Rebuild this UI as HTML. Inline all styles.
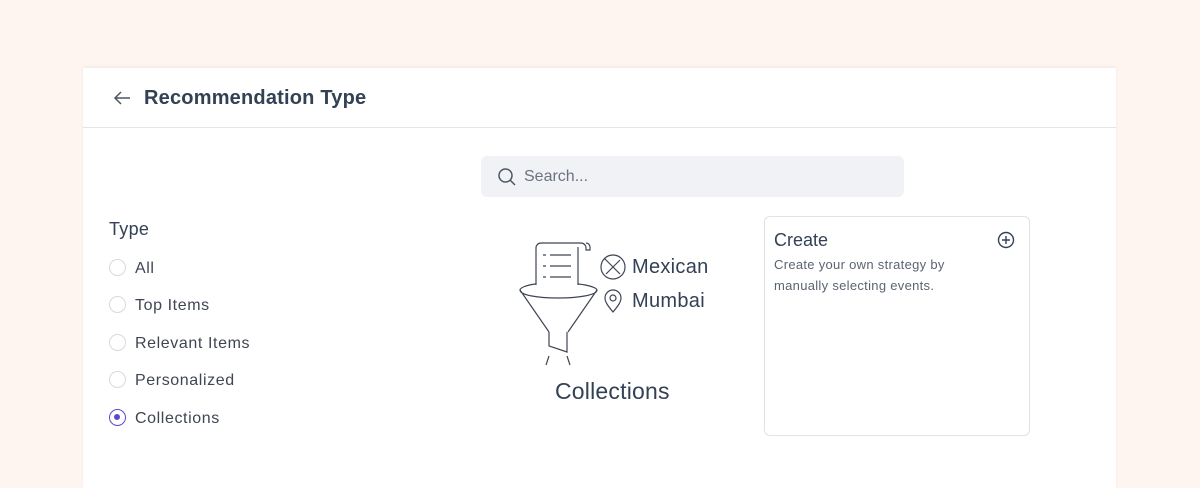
<!DOCTYPE html><html><head><style>
body{margin:0;width:1200px;height:474px;background:#fef5f0;font-family:"Liberation Sans",sans-serif;position:relative;overflow:hidden;color:#334155}
.card{position:absolute;left:83px;top:68px;width:1033px;height:420px;background:#fff;box-shadow:0 -1px 3px rgba(0,0,0,.06)}
.hdr{height:59px;border-bottom:1px solid #e2e5ea;position:relative}
.t{position:absolute;left:61px;top:19px;font-size:20px;font-weight:bold;color:#334155;letter-spacing:.2px}
.search{position:absolute;left:398px;top:88px;width:423px;height:41px;background:#f1f2f5;border-radius:6px}
.search span{position:absolute;left:43px;top:12px;font-size:16px;color:#6b7280}
.type{position:absolute;left:26px;top:151px;font-size:18px;color:#334155;letter-spacing:.3px}
.r{position:absolute;left:26px;font-size:16px;color:#3f4553;letter-spacing:.6px}
.r i{display:inline-block;width:17px;height:17px;border:1px solid #d6d9de;border-radius:50%;vertical-align:-3px;margin-right:9px;box-sizing:border-box;position:relative}
.r i.on{border:1.5px solid #5b4ad1}
.r i.on:after{content:"";position:absolute;left:4px;top:4px;width:6px;height:6px;border-radius:50%;background:#5b4ad1}
.box{position:absolute;left:681px;top:148px;width:264px;height:218px;border:1px solid #dfe2e6;border-radius:6px}
</style></head><body>
<div class="card">
<div class="hdr">
<svg style="position:absolute;left:30px;top:22px" width="18" height="16" viewBox="0 0 18 16"><path d="M17 8H2M8 2L2 8l6 6" fill="none" stroke="#4b5563" stroke-width="1.5"/></svg>
<div class="t">Recommendation Type</div></div>
<div class="search"><svg style="position:absolute;left:16px;top:11px" width="20" height="20" viewBox="0 0 20 20"><circle cx="8.5" cy="8.5" r="6.5" fill="none" stroke="#4b5563" stroke-width="1.5"/><path d="M13.5 13.5L18 18" stroke="#4b5563" stroke-width="1.5"/></svg><span>Search...</span></div>
<div class="type">Type</div>
<div class="r" style="top:191px"><i></i>All</div>
<div class="r" style="top:228px"><i></i>Top Items</div>
<div class="r" style="top:266px"><i></i>Relevant Items</div>
<div class="r" style="top:303px"><i></i>Personalized</div>
<div class="r" style="top:341px"><i class="on"></i>Collections</div>
</div>
<svg style="position:absolute;left:0;top:0" width="1200" height="474" viewBox="0 0 1200 474" fill="none" stroke="#3f4553" stroke-width="1.2">
<path d="M536 285V248a5 5 0 015-5h40a5 5 0 015 5v2h4v-3a4 4 0 00-4-4"/><path d="M578 247v38"/>
<path d="M543 255h3M550 255h21M543 266h3M550 266h21M543 277h3M550 277h21" stroke-width="1.3"/>
<path d="M536 284c-10 1-16 4-16 6c0 5 17 8 38 8s39-3 39-8c0-2-8-5-19-6"/>
<path d="M520 290l29 42M597 290l-29 42"/><path d="M549 332v14l18 6v-20"/>
<path d="M549 356l-3 9M567 356l3 9"/>
<circle cx="613" cy="267" r="12"/><path d="M606 260l14 14M620 260l-14 14M604 258l4 4"/>
<path d="M613 312c-5-6-8-10-8-14a8 8 0 0116 0c0 4-3 8-8 14z"/><circle cx="613" cy="298" r="3"/>
</svg>
<div style="position:absolute;left:632px;top:256px;font-size:20px;color:#334155;letter-spacing:.3px">Mexican</div>
<div style="position:absolute;left:632px;top:290px;font-size:20px;color:#334155;letter-spacing:.3px">Mumbai</div>
<div style="position:absolute;left:555px;top:378px;font-size:23px;color:#334155;letter-spacing:.2px">Collections</div>
<div class="box" style="left:764px;top:216px">
<div style="position:absolute;left:9px;top:13px;font-size:18px;color:#334155">Create</div>
<svg style="position:absolute;left:232px;top:14px" width="18" height="18" viewBox="0 0 18 18"><circle cx="9" cy="9" r="7.5" fill="none" stroke="#334155" stroke-width="1.4"/><path d="M9 5v8M5 9h8" stroke="#334155" stroke-width="1.4"/></svg>
<div style="position:absolute;left:9px;top:37px;font-size:13px;line-height:21px;color:#5b6472;width:190px;letter-spacing:.3px">Create your own strategy by manually selecting events.</div>
</div>
</body></html>
